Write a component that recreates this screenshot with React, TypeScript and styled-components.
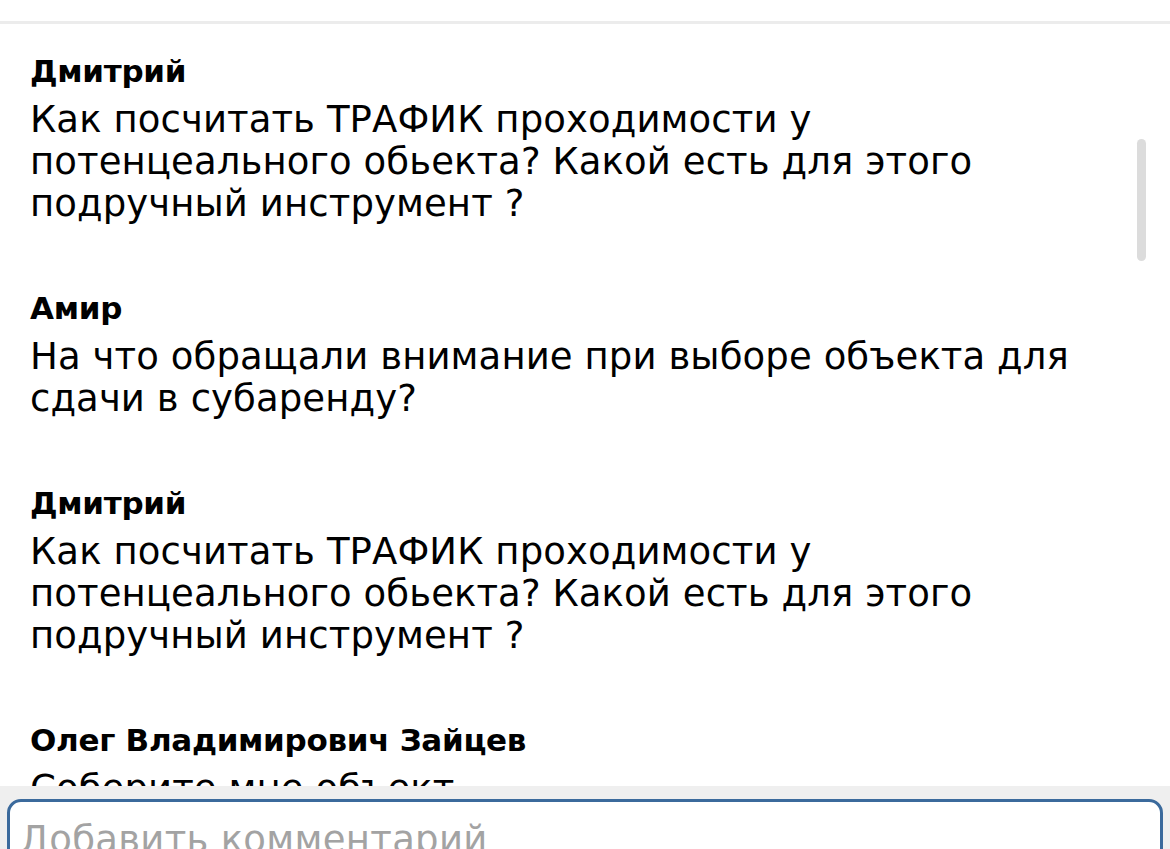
import React from "react";
import styled, { createGlobalStyle } from "styled-components";

const GlobalStyle = createGlobalStyle`
  html, body { margin: 0; padding: 0; background: #ffffff; }
  body { font-family: "DejaVu Sans", Inter, "Liberation Sans", sans-serif; color: #000; }
  * { box-sizing: border-box; }
`;

const Page = styled.div`
  height: 100vh;
  display: flex;
  flex-direction: column;
  overflow: hidden;
  background: #ffffff;
`;

const TopBar = styled.div`
  height: 24px;
  flex: none;
  background: #ffffff;
  border-bottom: 3px solid #ececec;
`;

const List = styled.div`
  position: relative;
  flex: 1;
  overflow: hidden;
  padding: 28px 30px 0;
  display: flex;
  flex-direction: column;
  gap: 64px;
`;

const Thumb = styled.div`
  position: absolute;
  top: 115px;
  right: 24px;
  width: 9px;
  height: 122px;
  border-radius: 5px;
  background: #dcdcdc;
`;

const Message = styled.div`
  display: flex;
  flex-direction: column;
  gap: 9px;
`;

const Author = styled.div`
  font-size: 31px;
  line-height: 38px;
  font-weight: 700;
  letter-spacing: -0.3px;
  color: #000;
`;

const Body = styled.div`
  font-size: 37px;
  line-height: 42px;
  font-weight: 400;
  letter-spacing: 0.1px;
  color: #000;
  max-width: 1090px;
`;

const Footer = styled.div`
  flex: none;
  height: 63px;
  overflow: hidden;
  background: #efefef;
  padding: 13px 7px 0;
`;

const InputBox = styled.div`
  height: 120px;
  background: #ffffff;
  border: 3px solid #3b6a9c;
  border-radius: 14px;
  padding: 17px 10px 0;
`;

const Placeholder = styled.div`
  font-size: 37px;
  line-height: 42px;
  letter-spacing: 0.3px;
  color: #a3a3a3;
`;

const messages = [
  {
    author: "Дмитрий",
    lines: [
      "Как посчитать ТРАФИК проходимости у",
      "потенцеального обьекта? Какой есть для этого",
      "подручный инструмент ?",
    ],
  },
  {
    author: "Амир",
    lines: ["На что обращали внимание при выборе объекта для", "сдачи в субаренду?"],
  },
  {
    author: "Дмитрий",
    lines: [
      "Как посчитать ТРАФИК проходимости у",
      "потенцеального обьекта? Какой есть для этого",
      "подручный инструмент ?",
    ],
  },
  {
    author: "Олег Владимирович Зайцев",
    lines: ["Соберите мне объект"],
  },
];

export default function App() {
  return (
    <>
      <GlobalStyle />
      <Page>
        <TopBar />
        <List>
          {messages.map((m, i) => (
            <Message key={i}>
              <Author>{m.author}</Author>
              <Body>
                {m.lines.map((l, j) => (
                  <React.Fragment key={j}>
                    {l}
                    {j < m.lines.length - 1 && <br />}
                  </React.Fragment>
                ))}
              </Body>
            </Message>
          ))}
          <Thumb />
        </List>
        <Footer>
          <InputBox>
            <Placeholder>Добавить комментарий</Placeholder>
          </InputBox>
        </Footer>
      </Page>
    </>
  );
}
